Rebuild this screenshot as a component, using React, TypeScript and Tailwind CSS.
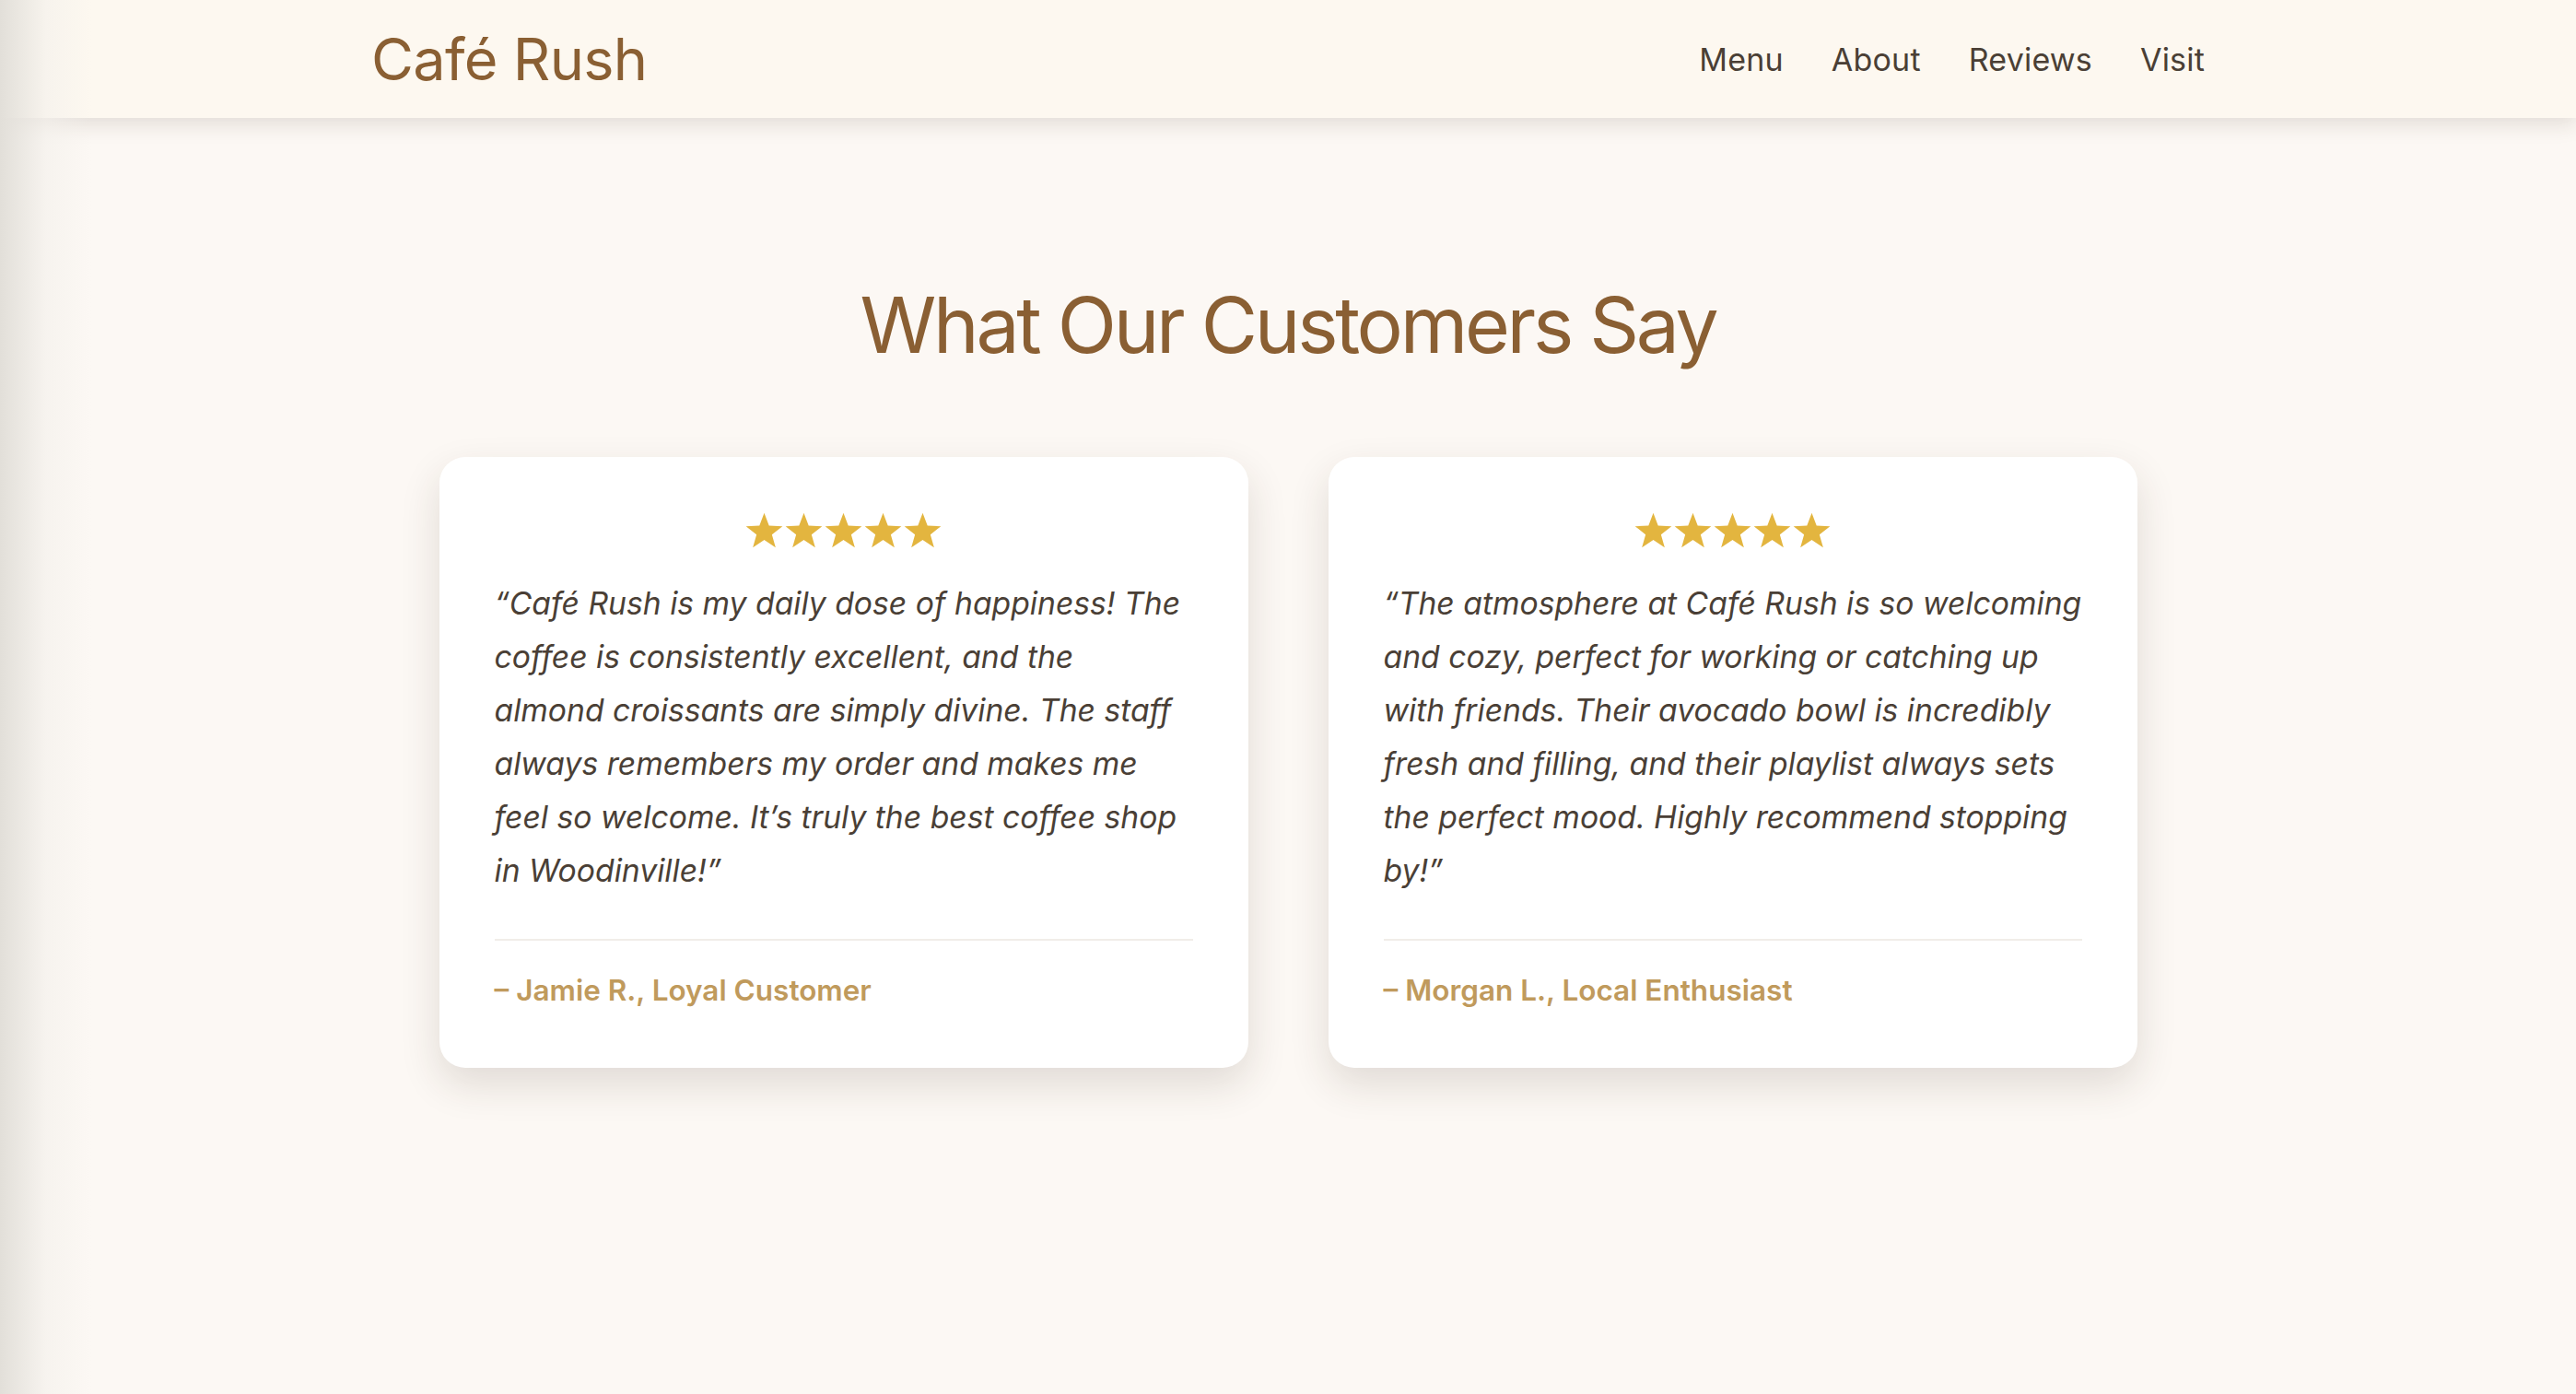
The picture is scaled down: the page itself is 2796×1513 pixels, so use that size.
import React from 'react';

const reviews = [
  {
    lines: [
      '“Café Rush is my daily dose of happiness! The',
      'coffee is consistently excellent, and the',
      'almond croissants are simply divine. The staff',
      'always remembers my order and makes me',
      'feel so welcome. It’s truly the best coffee shop',
      'in Woodinville!”',
    ],
    author: '– Jamie R., Loyal Customer',
  },
  {
    lines: [
      '“The atmosphere at Café Rush is so welcoming',
      'and cozy, perfect for working or catching up',
      'with friends. Their avocado bowl is incredibly',
      'fresh and filling, and their playlist always sets',
      'the perfect mood. Highly recommend stopping',
      'by!”',
    ],
    author: '– Morgan L., Local Enthusiast',
  },
];

function Stars() {
  return (
    <div className="flex justify-center">
      {[0, 1, 2, 3, 4].map((i) => (
        <svg key={i} width="43" height="40" viewBox="0 0 24 23" className="block">
          <polygon
            points="12,0.5 15,8.4 23.4,8.7 16.8,13.9 19.1,22 12,17.3 4.9,22 7.2,13.9 0.6,8.7 9,8.4"
            fill="#e3b53f"
          />
        </svg>
      ))}
    </div>
  );
}

export default function App() {
  return (
    <div className="relative min-h-screen bg-[#fcf8f4] font-['Inter','Noto_Sans',sans-serif]">
      {/* header */}
      <header className="h-[128px] bg-[#fdf8f0] shadow-[0_6px_22px_rgba(60,45,30,0.14)] relative z-10">
        <div className="w-[1990px] mx-auto h-full flex items-center justify-between">
          <span className="text-[63px] text-[#8a5f33] tracking-[-0.7px]">Café Rush</span>
          <nav className="flex items-center gap-[52px] text-[34px] text-[#4a3f35] tracking-[0.2px]">
            <a href="#">Menu</a>
            <a href="#">About</a>
            <a href="#">Reviews</a>
            <a href="#">Visit</a>
          </nav>
        </div>
      </header>

      {/* reviews */}
      <section className="pt-[175px] pb-[120px]">
        <h2 className="text-center text-[84px] leading-[1.2] text-[#8a5f33] tracking-[-3.3px]">
          What Our Customers Say
        </h2>
        <div className="w-[1843px] mx-auto mt-[92px] grid grid-cols-2 gap-[87px]">
          {reviews.map((r) => (
            <div
              key={r.author}
              className="bg-white rounded-[28px] p-[60px] shadow-[0_18px_44px_rgba(60,45,30,0.14)]"
            >
              <Stars />
              <p className="mt-[30px] mb-[45px] italic text-[33.7px] leading-[58px] text-[#4a3f36]">
                {r.lines.map((l) => (
                  <span key={l} className="block whitespace-nowrap">
                    {l}
                  </span>
                ))}
              </p>
              <div className="border-t-2 border-[#f1ede9] pt-[30px] text-[31.5px] leading-[48px] font-semibold text-[#c09a5c]">
                {r.author}
              </div>
            </div>
          ))}
        </div>
      </section>

      {/* left edge shade */}
      <div className="pointer-events-none absolute inset-y-0 left-0 w-[100px] z-20 bg-gradient-to-r from-[#e2dfd9] via-[#f3f0eb]/60 to-transparent" />
    </div>
  );
}
